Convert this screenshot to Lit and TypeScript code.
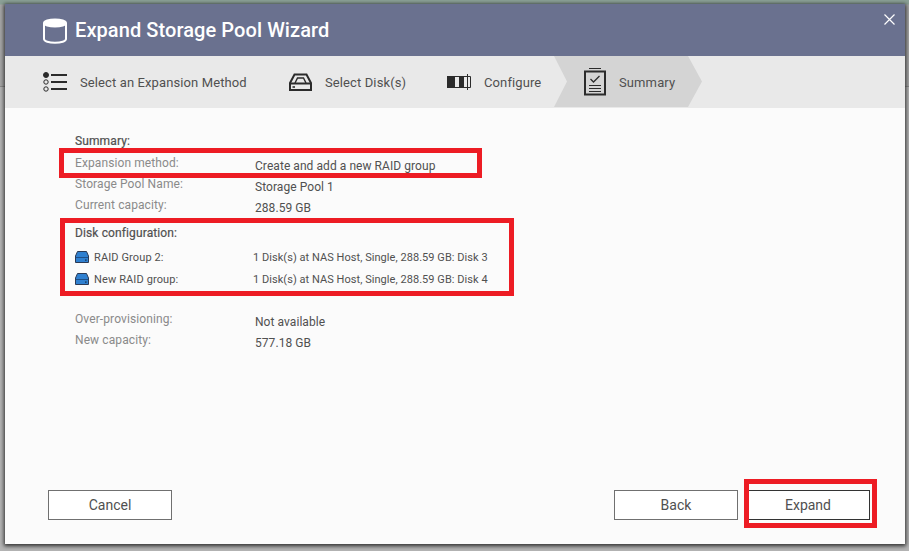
import { LitElement, html, css, svg } from "lit";
import { customElement } from "lit/decorators.js";

const disk = svg`<svg class="dk" width="14" height="12" viewBox="0 0 14 12"><path d="M2.5 .5h9L13.5 5v6.5H.5V5z" fill="#2f80d0" stroke="#2b3a55"/><path d="M.8 6.500h12.400" stroke="#1f4f86"/><rect x="10" y="8.500" width="1.600" height="1.200" fill="#14304f"/></svg>`;

@customElement("app-root")
export class AppRoot extends LitElement {
  static styles = css`
    :host { display: block; width: 909px; height: 551px; overflow: hidden; position: relative; background: #9a9a9a; font-family: Roboto, "Liberation Sans", sans-serif; color: #505050; }
    .bg { position: absolute; inset: 0; background: linear-gradient(#8ba096 0, #8ba096 4px, #a6a6a6 5px, #a6a6a6 86px, #8a8a8a 86px, #8a8a8a 87px, #b4b4b4 87px, #b4b4b4 100%); }
    .dlg { position: absolute; left: 5px; top: 4px; width: 900px; height: 540px; background: #fbfbfb; box-shadow: 0 1px 4px 1px rgba(0,0,0,.75); display: flex; flex-direction: column; }
    .head { height: 52px; flex: none; background: #6a718f; display: flex; align-items: center; padding-left: 38px; gap: 8px; color: #fff; font-size: 20px; font-weight: 500; letter-spacing: .08px; position: relative; box-sizing: border-box; }
    .head svg.db { margin-top: 1px; }
    .close { position: absolute; left: 879px; top: 10px; }
    .nav { height: 52px; flex: none; background: #e9e9e9; display: flex; font-size: 13px; color: #505050; letter-spacing: .11px; align-items: stretch; padding-bottom: 1px; box-sizing: border-box; }
    .step { display: flex; align-items: center; box-sizing: border-box; }
    .step span { padding-top: 2px; }
    .s1 { width: 284px; padding-left: 38px; gap: 13px; }
    .s2 { width: 158px; gap: 13px; }
    .s3 { width: 107px; gap: 13px; }
    .s4 { width: 148px; padding-left: 30px; gap: 13px; background: #d4d4d4; clip-path: polygon(0 0, 134px 0, 148px 50%, 134px 100%, 0 100%, 13px 50%); }
    .body { flex: 1; padding: 23px 0 0 70px; font-size: 12px; color: #8a8a8a; position: relative; }
    .h { color: #505050; font-weight: 400; height: 20px; line-height: 20px; letter-spacing: .12px; -webkit-text-stroke: .2px #505050; }
    .first { margin-top: 4px; }
    .row { display: grid; grid-template-columns: 180px auto; height: 21px; }
    .row b { font-weight: 400; color: #505050; padding-top: 3px; line-height: 17px; letter-spacing: .06px; }
    .row span { line-height: 17px; letter-spacing: .1px; }
    .cfg { margin-top: 5px; }
    .dr { display: grid; grid-template-columns: 178px auto; height: 22px; align-items: center; font-size: 11px; color: #505050; letter-spacing: .05px; }
    .dr span { display: flex; align-items: center; gap: 5px; letter-spacing: .12px; }
    .first-dr { margin-top: 3px; }
    .gap { height: 21px; }
    .foot { height: 36px; flex: none; display: flex; padding: 0 35px 0 43px; margin-bottom: 18px; gap: 8px; }
    .btn { width: 124px; height: 30px; box-sizing: border-box; border: 1px solid #707070; background: #fff; font: 14px Roboto, sans-serif; color: #505050; display: flex; align-items: center; justify-content: center; padding: 0; }
    .sp { flex: 1; }
    .dark { border-color: #333; }
    .mark { position: absolute; border: 5px solid #ed1c24; box-sizing: border-box; }
    .m1 { left: 59px; top: 148px; width: 423px; height: 30px; }
    .m2 { left: 60px; top: 218px; width: 454px; height: 78px; }
    .m3 { left: 744px; top: 479px; width: 133px; height: 49px; }
  `;

  render() {
    return html`
      <div class="bg"></div>
      <div class="dlg">
        <div class="head">
          <svg class="db" width="24" height="26" viewBox="0 0 24 26" fill="none" stroke="#fff" stroke-width="2"><ellipse cx="12" cy="5" rx="11" ry="3.500" fill="#fff"/><path d="M1 5v16c0 2.200 5 3.800 11 3.800s11-1.600 11-3.800V5"/></svg>
          <span>Expand Storage Pool Wizard</span>
          <svg class="close" width="11" height="11" viewBox="0 0 11 11" stroke="#fff" stroke-width="1.200"><path d="M.5 .5l10 10M10.500 .5l-10 10"/></svg>
        </div>
        <div class="nav">
          <div class="step s1">
            <svg width="24" height="20" viewBox="0 0 24 20" fill="none" stroke="#2b2b2b"><circle cx="3" cy="3" r="2.500" fill="#2b2b2b"/><circle cx="3" cy="10" r="2.200"/><circle cx="3" cy="17" r="2.200"/><path d="M8 3h16M8 10h16M8 17h16" stroke-width="2"/></svg>
            <span>Select an Expansion Method</span>
          </div>
          <div class="step s2">
            <svg width="23" height="18" viewBox="0 0 23 18" fill="none" stroke="#2b2b2b" stroke-width="2"><path d="M1 10L5.500 1.500h12L22 10v7H1z"/><path d="M1 10.500h21"/><path d="M6 10l2.500-5h6l2.500 5" stroke-width="1.400"/><path d="M3.500 14h2.500" stroke-width="1.600"/></svg>
            <span>Select Disk(s)</span>
          </div>
          <div class="step s3">
            <svg width="24" height="16" viewBox="0 0 24 16" fill="none"><rect x="0" y="2" width="8" height="12" fill="#2b2b2b"/><rect x="12" y="2" width="5" height="12" fill="#2b2b2b"/><path d="M8 2.500h15.500v11H8" stroke="#2b2b2b"/><path d="M20.500 0v16" stroke="#2b2b2b"/></svg>
            <span>Configure</span>
          </div>
          <div class="step s4">
            <svg width="22" height="28" viewBox="0 0 22 28" fill="none" stroke="#2b2b2b"><path d="M1 3.500h20v23H1z" stroke-width="2"/><path d="M5 .500h12"/><path d="M6.500 11l3 3 6-6" stroke-width="1.300"/><path d="M5 17.500h12M5 20.500h12M5 23.500h12"/></svg>
            <span>Summary</span>
          </div>
        </div>
        <div class="body">
          <div class="h">Summary:</div>
          <div class="row first"><span>Expansion method:</span><b>Create and add a new RAID group</b></div>
          <div class="row"><span>Storage Pool Name:</span><b>Storage Pool 1</b></div>
          <div class="row"><span>Current capacity:</span><b>288.59 GB</b></div>
          <div class="h cfg">Disk configuration:</div>
          <div class="dr first-dr"><span>${disk}RAID Group 2:</span><div>1 Disk(s) at NAS Host, Single, 288.59 GB: Disk 3</div></div>
          <div class="dr"><span>${disk}New RAID group:</span><div>1 Disk(s) at NAS Host, Single, 288.59 GB: Disk 4</div></div>
          <div class="gap"></div>
          <div class="row"><span>Over-provisioning:</span><b>Not available</b></div>
          <div class="row"><span>New capacity:</span><b>577.18 GB</b></div>
        </div>
        <div class="foot">
          <button class="btn">Cancel</button>
          <div class="sp"></div>
          <button class="btn">Back</button>
          <button class="btn dark">Expand</button>
        </div>
      </div>
      <div class="mark m1"></div>
      <div class="mark m2"></div>
      <div class="mark m3"></div>
    `;
  }
}
